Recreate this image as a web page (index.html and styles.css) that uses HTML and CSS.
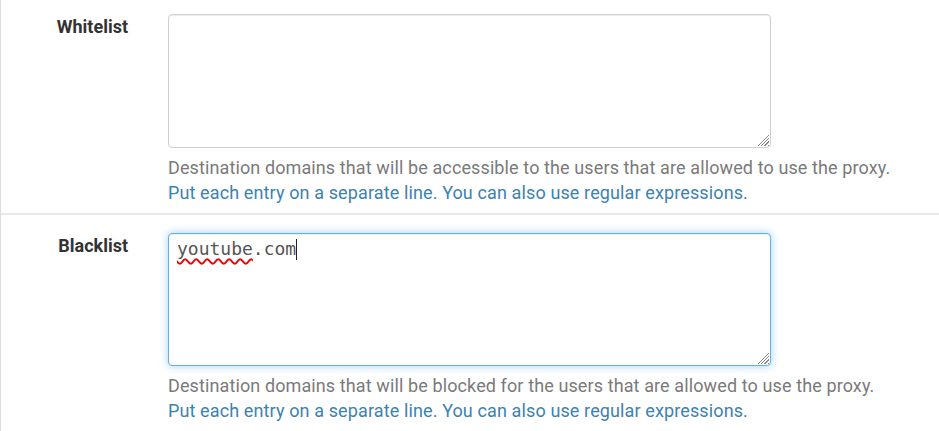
FILE: index.html
```html
<!DOCTYPE html>
<html>
<head>
<meta charset="utf-8">
<link rel="stylesheet" href="styles.css">
</head>
<body>
<div class="panel">
  <div class="row first">
    <label class="label">Whitelist</label>
    <div class="field">
      <div class="boxwrap">
        <textarea class="box" spellcheck="false"></textarea>
        <span class="grip"></span>
      </div>
      <p class="help">Destination domains that will be accessible to the users that are allowed to use the proxy.</p>
      <p class="help blue">Put each entry on a separate line. You can also use regular expressions.</p>
    </div>
  </div>
  <div class="row second">
    <label class="label">Blacklist</label>
    <div class="field">
      <div class="boxwrap">
        <div class="box focus"><span class="typo">youtube</span>.com<span class="caret"></span></div>
        <span class="grip"></span>
      </div>
      <p class="help">Destination domains that will be blocked for the users that are allowed to use the proxy.</p>
      <p class="help blue">Put each entry on a separate line. You can also use regular expressions.</p>
    </div>
  </div>
</div>
</body>
</html>
```
FILE: styles.css
```css
html, body {
  margin: 0;
  padding: 0;
  background: #fff;
}
body {
  font-family: Roboto, "Liberation Sans", sans-serif;
  width: 939px;
  height: 431px;
  overflow: hidden;
}
.panel {
  border-left: 1px solid #dcdcdc;
  height: 431px;
}
.row {
  display: grid;
  grid-template-columns: 127px 1fr;
  column-gap: 40px;
  padding-bottom: 8px;
}
.row.first {
  padding-top: 14px;
  border-bottom: 2px solid #eaeaea;
}
.row.second {
  padding-top: 18px;
}
.label {
  text-align: right;
  font-weight: bold;
  font-size: 18px;
  color: #333;
  line-height: 25px;
}
.field {
  display: flex;
  flex-direction: column;
}
.boxwrap {
  position: relative;
  width: 603px;
}
.box {
  box-sizing: border-box;
  display: block;
  width: 603px;
  height: 134px;
  margin: 0;
  border: 1px solid #cfcfcf;
  border-radius: 4px;
  background: #fff;
  box-shadow: inset 0 1px 1px rgba(0, 0, 0, 0.075);
  resize: none;
  overflow: hidden;
  padding: 4px 8px;
  font-family: "DejaVu Sans Mono", "Liberation Mono", monospace;
  font-size: 18px;
  line-height: 22px;
  color: #555;
}
.box.focus {
  height: 133px;
  border-color: #66afe9;
  box-shadow: inset 0 1px 1px rgba(0, 0, 0, 0.075), 0 0 8px rgba(102, 175, 233, 0.6);
}
.grip {
  position: absolute;
  right: 2px;
  bottom: 2px;
  width: 12px;
  height: 12px;
  background: repeating-linear-gradient(135deg, transparent 0, transparent 1.3px, #8a8a8a 1.3px, #8a8a8a 2.4px);
  clip-path: polygon(100% 0, 100% 100%, 0 100%);
}
.typo {
  text-decoration: underline wavy #e00;
  text-decoration-thickness: 1.5px;
  text-decoration-skip-ink: none;
  text-underline-offset: 3px;
}
.caret {
  display: inline-block;
  width: 1px;
  height: 21px;
  background: #222;
  vertical-align: -5px;
}
.help {
  margin: 0;
  font-size: 18px;
  line-height: 25px;
  color: #7a7a7a;
  white-space: nowrap;
  letter-spacing: 0.11px;
}
.help:first-of-type {
  margin-top: 7px;
}
.help.blue {
  color: #3b82b3;
  letter-spacing: 0.12px;
}
```
